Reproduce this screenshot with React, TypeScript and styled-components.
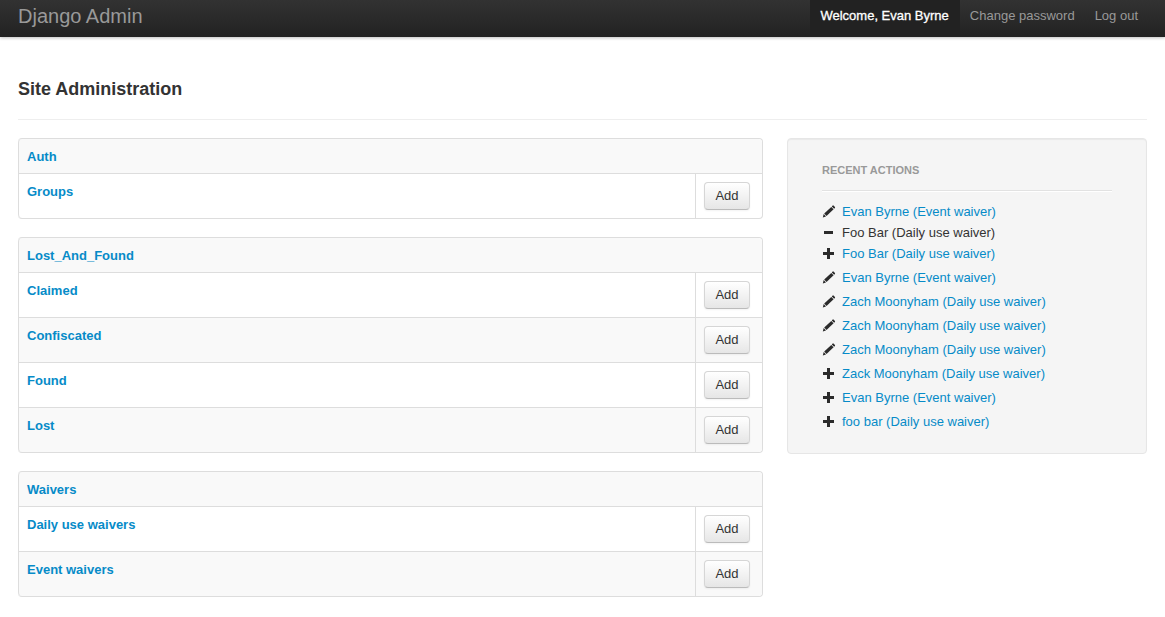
import React from "react";
import styled, { createGlobalStyle } from "styled-components";

const GlobalStyle = createGlobalStyle`
  *, *::before, *::after { box-sizing: border-box; }
  body {
    margin: 0;
    background: #fff;
    color: #333;
    font-family: "Helvetica Neue", "Liberation Sans", Arial, sans-serif;
    font-size: 13px;
    line-height: 18px;
  }
`;

const Navbar = styled.header`
  display: flex;
  justify-content: space-between;
  height: 37px;
  padding: 0 17px 0 18px;
  background: linear-gradient(to bottom, #323232, #222);
  box-shadow: 0 1px 3px rgba(0, 0, 0, 0.25);
`;

const Brand = styled.a`
  padding-top: 7px;
  color: #999;
  font-size: 20px;
  line-height: 18px;
  text-decoration: none;
`;

const Nav = styled.nav`
  display: flex;
`;

const NavText = styled.span`
  padding: 7px 11px 0 10px;
  background: #222;
  color: #fff;
  -webkit-text-stroke: 0.3px #fff;
`;

const NavLink = styled.a`
  padding: 7px 10px 0;
  color: #999;
  text-decoration: none;
`;

const Page = styled.div`
  padding: 43px 18px 20px;
`;

const Title = styled.h1`
  margin: 0;
  padding-bottom: 21px;
  border-bottom: 1px solid #eee;
  font-size: 18px;
  line-height: 18px;
  font-weight: 700;
`;

const Columns = styled.div`
  display: grid;
  grid-template-columns: minmax(0, 745fr) minmax(0, 360fr);
  align-items: start;
  gap: 24px;
  margin-top: 18px;
`;

const Apps = styled.main`
  display: flex;
  flex-direction: column;
  gap: 18px;
`;

const AppTable = styled.table`
  width: 100%;
  border: 1px solid #ddd;
  border-left: 0;
  border-radius: 4px;
  border-collapse: separate;
  border-spacing: 0;

  th, td {
    padding: 8px;
    border-left: 1px solid #ddd;
    text-align: left;
    vertical-align: top;
  }
  th { padding: 9px 8px 7px; }
  tbody th, tbody td { border-top: 1px solid #ddd; }
  thead th, tbody tr:nth-child(even) > * { background: #f9f9f9; }
  thead th { border-radius: 4px 4px 0 0; }
  tbody tr:last-child th { border-bottom-left-radius: 4px; }
  tbody tr:last-child td { border-bottom-right-radius: 4px; }
`;

const ActionCell = styled.td`
  width: 67px;
`;

const Link = styled.a`
  color: #068bc8;
  text-decoration: none;
  &:hover { text-decoration: underline; }
`;

const AddButton = styled.button`
  display: block;
  width: 46px;
  height: 28px;
  padding: 0 0 1px;
  border: 1px solid #d6d6d6;
  border-bottom-color: #bbb;
  border-radius: 4px;
  background: linear-gradient(to bottom, #fff, #e6e6e6);
  box-shadow: inset 0 1px 0 rgba(255, 255, 255, 0.2), 0 1px 2px rgba(0, 0, 0, 0.05);
  color: #333;
  font: inherit;
`;

const Sidebar = styled.aside`
  padding: 22px 34px 19px;
  border: 1px solid #e6e6e6;
  border-radius: 4px;
  background: #f5f5f5;
  box-shadow: inset 0 1px 1px rgba(0, 0, 0, 0.05);
`;

const SidebarTitle = styled.h2`
  margin: 0 0 9px;
  padding-bottom: 11px;
  border-bottom: 1px solid #e2e2e2;
  box-shadow: 0 1px 0 #fff;
  color: #999;
  font-size: 11px;
  line-height: 18px;
  font-weight: 700;
  text-transform: uppercase;
`;

const ActionList = styled.ul`
  margin: 0;
  padding: 0;
  list-style: none;
`;

const ActionItem = styled.li<{ $compact: boolean }>`
  display: flex;
  align-items: center;
  gap: 6px;
  height: ${({ $compact }) => ($compact ? 18 : 24)}px;
`;

type Kind = "change" | "delete" | "add";

const Glyph = ({ kind }: { kind: Kind }) => (
  <svg width="14" height="14" viewBox="0 0 14 14" fill="#2b2b2b" aria-hidden="true">
    {kind === "add" && <path d="M5 1h3v4h4v3H8v4H5V8H1V5h4z" />}
    {kind === "delete" && <path d="M2 5h9v3H2z" />}
    {kind === "change" && (
      <>
        <path d="M10.6.6c.3-.3.7-.3 1 0l1.300 1.300c.3.3.3.7 0 1l-.8.8-2.300-2.300z" />
        <path d="M9.300 1.900l2.300 2.300-7.100 6.700-2.300-2.300z" />
        <path d="M1.700 9.100l2.300 2.300-3.200 1.100z" />
      </>
    )}
  </svg>
);

const apps = [
  { name: "Auth", models: ["Groups"] },
  { name: "Lost_And_Found", models: ["Claimed", "Confiscated", "Found", "Lost"] },
  { name: "Waivers", models: ["Daily use waivers", "Event waivers"] },
];

const actions: { kind: Kind; text: string }[] = [
  { kind: "change", text: "Evan Byrne (Event waiver)" },
  { kind: "delete", text: "Foo Bar (Daily use waiver)" },
  { kind: "add", text: "Foo Bar (Daily use waiver)" },
  { kind: "change", text: "Evan Byrne (Event waiver)" },
  { kind: "change", text: "Zach Moonyham (Daily use waiver)" },
  { kind: "change", text: "Zach Moonyham (Daily use waiver)" },
  { kind: "change", text: "Zach Moonyham (Daily use waiver)" },
  { kind: "add", text: "Zack Moonyham (Daily use waiver)" },
  { kind: "add", text: "Evan Byrne (Event waiver)" },
  { kind: "add", text: "foo bar (Daily use waiver)" },
];

export default function App() {
  return (
    <>
      <GlobalStyle />
      <Navbar>
        <Brand href="#">Django Admin</Brand>
        <Nav>
          <NavText>Welcome, Evan Byrne</NavText>
          <NavLink href="#">Change password</NavLink>
          <NavLink href="#">Log out</NavLink>
        </Nav>
      </Navbar>
      <Page>
        <Title>Site Administration</Title>
        <Columns>
          <Apps>
            {apps.map((app) => (
              <AppTable key={app.name}>
                <thead>
                  <tr>
                    <th colSpan={2} scope="colgroup">
                      <Link href="#">{app.name}</Link>
                    </th>
                  </tr>
                </thead>
                <tbody>
                  {app.models.map((model) => (
                    <tr key={model}>
                      <th scope="row">
                        <Link href="#">{model}</Link>
                      </th>
                      <ActionCell>
                        <AddButton type="button">Add</AddButton>
                      </ActionCell>
                    </tr>
                  ))}
                </tbody>
              </AppTable>
            ))}
          </Apps>
          <Sidebar>
            <SidebarTitle>Recent Actions</SidebarTitle>
            <ActionList>
              {actions.map(({ kind, text }, index) => (
                <ActionItem key={index} $compact={kind === "delete"}>
                  <Glyph kind={kind} />
                  {kind === "delete" ? <span>{text}</span> : <Link href="#">{text}</Link>}
                </ActionItem>
              ))}
            </ActionList>
          </Sidebar>
        </Columns>
      </Page>
    </>
  );
}
